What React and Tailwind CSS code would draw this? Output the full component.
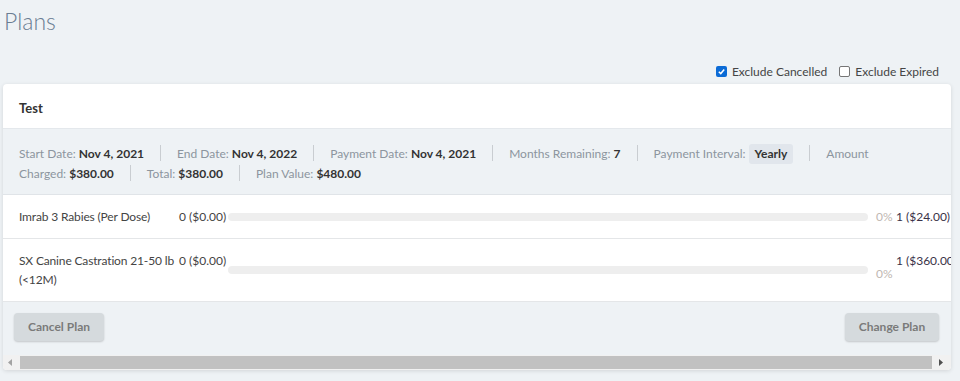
import React from "react";

const Sep = () => (
  <span className="inline-block w-px h-[16px] bg-[#c9cdd1] mx-[16px] align-[-3px]" />
);

const Item = ({ label, value, badge, last }) => (
  <>
    <span className="text-[#8c959e]">{label}</span>{" "}
    {badge ? (
      <span className="inline-block bg-[#e1e6ec] rounded-[3px] px-[6px] leading-[20px] font-bold text-[#333]">
        {value}
      </span>
    ) : (
      <span className="font-bold text-[#333]">{value}</span>
    )}
    {!last && <Sep />}
  </>
);

const Row = ({ name, used, total, tall }) => (
  <div className="flex items-start pl-[16px] py-[12px] border-b border-[#e4e6e8] w-[951px]">
    <div className="w-[160px] shrink-0 leading-[19px] text-[#444] tracking-[-0.15px]">{name}</div>
    <div className="w-[49px] shrink-0 leading-[19px] text-[#444] whitespace-nowrap">{used}</div>
    <div className="flex-1 min-w-0 h-[8px] rounded-full bg-[#eeeeee] self-center" />
    <div className={"ml-[8px] w-[20px] shrink-0 text-[#c0b7b2] leading-[19px] self-center " + (tall ? "mt-[6px]" : "")}>0%</div>
    <div className="w-[58px] shrink-0 whitespace-nowrap leading-[19px] text-[#3a3248]">{total}</div>
  </div>
);

const Check = ({ checked }) =>
  checked ? (
    <span className="inline-flex w-[11px] h-[11px] rounded-[2px] bg-[#0b6bd6] items-center justify-center">
      <svg width="9" height="9" viewBox="0 0 10 10">
        <path d="M2 5.2 L4.2 7.3 L8 2.8" stroke="white" strokeWidth="1.7" fill="none" />
      </svg>
    </span>
  ) : (
    <span className="inline-block w-[11px] h-[11px] rounded-[2px] border border-[#767676] bg-white" />
  );

export default function App() {
  return (
    <div
      className="w-[960px] h-[381px] bg-[#eef2f5] overflow-hidden text-[12px]"
      style={{ fontFamily: "Lato, 'Noto Sans', sans-serif" }}
    >
      <div className="pl-[4px] pt-[6px] h-[58px] text-[23px] font-light text-[#6a7d92] leading-[30px]">
        Plans
      </div>
      <div className="flex justify-end items-center gap-[12px] pr-[21px] h-[26px] pt-[1px] text-[12px] text-[#454545]">
        <label className="flex items-center gap-[5px]">
          <Check checked />
          <span>Exclude Cancelled</span>
        </label>
        <label className="flex items-center gap-[5px]">
          <Check />
          <span>Exclude Expired</span>
        </label>
      </div>
      <div className="ml-[3px] w-[948px] rounded-[4px] bg-white shadow-[0_1px_4px_rgba(0,0,0,0.12)] overflow-hidden">
        <div className="h-[45px] flex items-center pl-[16px] pt-[5px] font-bold text-[13px] text-[#333] border-b border-[#e4e8ec]">
          Test
        </div>
        <div className="overflow-hidden">
          <div className="w-[951px]">
            <div className="bg-[#eef2f5] px-[16px] pt-[15px] pb-[11px] leading-[19px] border-b border-[#e0e4e8]">
              <div className="w-[870px]">
                <Item label="Start Date:" value="Nov 4, 2021" />
                <Item label="End Date:" value="Nov 4, 2022" />
                <Item label="Payment Date:" value="Nov 4, 2021" />
                <Item label="Months Remaining:" value="7" />
                <Item label="Payment Interval:" value="Yearly" badge />
                <Item label="Amount Charged:" value="$380.00" />
                <Item label="Total:" value="$380.00" />
                <Item label="Plan Value:" value="$480.00" last />
              </div>
            </div>
            <Row name="Imrab 3 Rabies (Per Dose)" used="0 ($0.00)" total="1 ($24.00)" />
            <Row name="SX Canine Castration 21-50 lb (<12M)" used="0 ($0.00)" total="1 ($360.00)" tall />
            <div className="bg-[#eef2f5] h-[53px] flex justify-between items-start pt-[11px] pl-[11px] pr-[12px] w-[948px]">
              <button className="w-[90px] h-[28px] rounded-[4px] bg-[#d5dadd] text-[#7a7a7a] font-bold text-[12px] shadow-[0_1px_2px_rgba(0,0,0,0.18)]">
                Cancel Plan
              </button>
              <button className="w-[94px] h-[28px] rounded-[4px] bg-[#d5dadd] text-[#7a7a7a] font-bold text-[12px] shadow-[0_1px_2px_rgba(0,0,0,0.18)]">
                Change Plan
              </button>
            </div>
          </div>
        </div>
        <div className="h-[15px] bg-[#f1f1f1] flex items-center">
          <div className="w-[15px] flex justify-center">
            <svg width="5" height="7" viewBox="0 0 5 7"><path d="M4 0 L0 3.5 L4 7 Z" fill="#a3a3a3" /></svg>
          </div>
          <div className="ml-[2px] w-[912px] h-[13px] bg-[#c1c1c1]" />
          <div className="flex-1 flex justify-center">
            <svg width="5" height="7" viewBox="0 0 5 7"><path d="M0 0 L4 3.5 L0 7 Z" fill="#505050" /></svg>
          </div>
        </div>
      </div>
    </div>
  );
}
